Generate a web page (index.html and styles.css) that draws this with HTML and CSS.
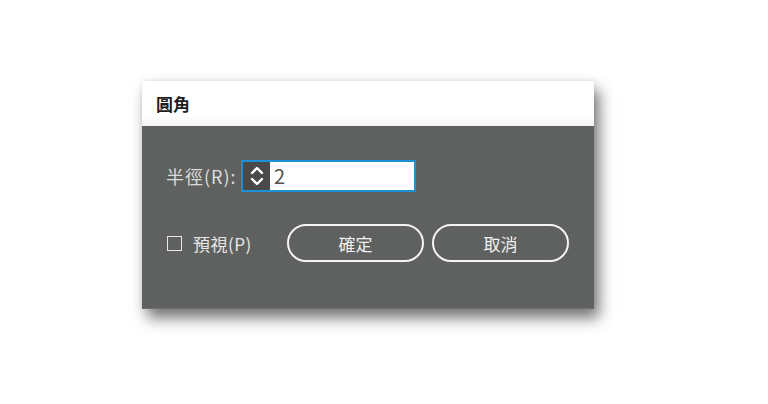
FILE: index.html
```html
<!DOCTYPE html>
<html lang="zh-Hant">
<head>
<meta charset="utf-8">
<title>圓角</title>
<link rel="stylesheet" href="styles.css">
</head>
<body>
<div class="page">
<div class="dialog">
  <div class="title">圓角</div>
  <div class="body">
    <div class="row row-radius">
      <label class="label">半徑(R):</label>
      <div class="field">
        <div class="spin">
          <svg width="14" height="24" viewBox="0 0 14 24">
            <path d="M2 9 L7 4 L12 9" fill="none" stroke="#ffffff" stroke-width="2.4" stroke-linecap="round" stroke-linejoin="round"/>
            <path d="M2 15 L7 20 L12 15" fill="none" stroke="#ffffff" stroke-width="2.4" stroke-linecap="round" stroke-linejoin="round"/>
          </svg>
        </div>
        <div class="value">2</div>
      </div>
    </div>
    <div class="row row-actions">
      <span class="check"></span>
      <span class="check-label">預視(P)</span>
      <div class="buttons">
        <button class="btn">確定</button>
        <button class="btn">取消</button>
      </div>
    </div>
  </div>
</div>
</div>
</body>
</html>
```
FILE: styles.css
```css
html, body {
  margin: 0;
  padding: 0;
  background: #ffffff;
}
body {
  font-family: "Noto Sans CJK TC", "Noto Sans", sans-serif;
}
.page {
  height: 404px;
  padding: 81px 0 0 142px;
  box-sizing: border-box;
  overflow: hidden;
}
.dialog {
  width: 452px;
  box-shadow: 5px 9px 14px rgba(0, 0, 0, 0.55), 0 -1px 4px rgba(0, 0, 0, 0.08);
}
.title {
  height: 45px;
  line-height: 45px;
  padding-left: 14px;
  font-size: 17px;
  font-weight: 700;
  color: #1d1d1d;
  background: linear-gradient(#ffffff 80%, #f3f3f3);
}
.body {
  height: 183px;
  box-sizing: border-box;
  padding: 34px 25px 0 24px;
  background: #5f6160;
  border-bottom: 1px solid #707070;
}
.row {
  display: flex;
  align-items: center;
}
.row-radius {
  height: 32px;
}
.label {
  width: 75px;
  font-size: 18px;
  letter-spacing: 1px;
  color: #dcdcdc;
  white-space: nowrap;
}
.field {
  width: 175px;
  height: 32px;
  box-sizing: border-box;
  border: 2px solid #1b8fd7;
  background: #ffffff;
  display: flex;
}
.spin {
  width: 27px;
  background: #4a4a4a;
  display: flex;
  align-items: center;
  justify-content: center;
}
.value {
  padding-left: 4px;
  font-size: 20px;
  line-height: 28px;
  color: #505050;
}
.row-actions {
  margin-top: 32px;
  height: 38px;
}
.check {
  width: 13px;
  height: 13px;
  border: 1.5px solid #e6e6e6;
  margin: 0 11px 0 1px;
}
.check-label {
  font-size: 17px;
  letter-spacing: 0.5px;
  color: #e6e6e6;
}
.buttons {
  margin-left: auto;
  display: flex;
  gap: 8px;
}
.btn {
  width: 137px;
  height: 38px;
  border: 2px solid #f4f4f4;
  border-radius: 19px;
  background: transparent;
  color: #f0f0f0;
  font-family: "Noto Sans CJK TC", sans-serif;
  font-size: 17px;
  padding: 0;
}
```
